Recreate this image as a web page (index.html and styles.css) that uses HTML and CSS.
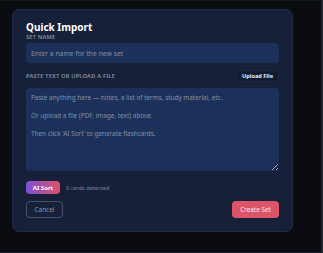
FILE: index.html
```html
<!DOCTYPE html>
<html lang="en">
<head>
    <meta charset="UTF-8">
    <meta name="viewport" content="width=device-width, initial-scale=1.0">
    <title>Quick Import</title>
    <link rel="stylesheet" href="styles.css">
</head>
<body>
    <div class="backdrop">
        <div class="modal">
            <h2 class="modal-title">Quick Import</h2>
            <label class="field-label" for="set-name">Set name</label>
            <input type="text" id="set-name" class="text-input" placeholder="Enter a name for the new set">

            <div class="paste-row">
                <span class="field-label">Paste text or upload a file</span>
                <button class="btn-upload">Upload File</button>
            </div>
            <textarea class="paste-area" placeholder="Paste anything here — notes, a list of terms, study material, etc.&#10;&#10;Or upload a file (PDF, image, text) above.&#10;&#10;Then click 'AI Sort' to generate flashcards."></textarea>

            <div class="sort-row">
                <button class="btn-sort">AI Sort</button>
                <span class="card-count">0 cards detected</span>
            </div>

            <div class="modal-actions">
                <button class="btn-cancel">Cancel</button>
                <button class="btn-create">Create Set</button>
            </div>
        </div>
    </div>
</body>
</html>
```

FILE: styles.css
```css
/* Dark overlay with the import dialog */
body {
    margin: 0;
    background-color: #0b0c11;
    font-family: "Noto Sans", "Open Sans", sans-serif;
}

.backdrop {
    height: 253px;
    box-sizing: border-box;
    padding: 9px 0 0 12px;
    border-top: 1px solid #181a21;
    border-right: 2px solid #23252c;
    border-bottom: 1px solid #1d1f26;
}

.modal {
    width: 281px;
    box-sizing: border-box;
    margin-top: -1px;
    padding: 11px 13px 13px 13px;
    border: 1px solid #222c48;
    border-radius: 7px;
    background-color: #172039;
}

.modal-title {
    margin: 0;
    font-size: 10px;
    line-height: 12px;
    font-weight: 700;
    color: #ffffff;
}

.field-label {
    display: block;
    font-size: 5.7px;
    line-height: 8px;
    font-weight: 600;
    letter-spacing: 0.2px;
    text-transform: uppercase;
    color: #8891a6;
}

.text-input {
    display: block;
    width: 100%;
    height: 20px;
    box-sizing: border-box;
    margin-top: 2px;
    padding: 0 5px;
    border: none;
    border-radius: 4px;
    background-color: #1b3159;
    font-family: inherit;
    font-size: 6.8px;
    color: #dde3ee;
    outline: none;
}

.text-input::placeholder,
.paste-area::placeholder {
    color: #8490a8;
}

.paste-row {
    display: flex;
    justify-content: space-between;
    align-items: center;
    margin-top: 7px;
    height: 12px;
}

.btn-upload {
    height: 12px;
    padding: 0 5px;
    border: 1px solid #1c2540;
    border-radius: 3px;
    background-color: #131b30;
    font-family: inherit;
    font-size: 5.6px;
    font-weight: 700;
    color: #eef1f6;
}

.paste-area {
    display: block;
    width: 100%;
    height: 83px;
    box-sizing: border-box;
    margin-top: 6px;
    padding: 5px;
    border: none;
    border-radius: 4px;
    background-color: #1b3159;
    font-family: inherit;
    font-size: 6.4px;
    line-height: 9px;
    color: #dde3ee;
    resize: vertical;
    outline: none;
}

.sort-row {
    display: flex;
    align-items: center;
    gap: 6px;
    margin-top: 10px;
}

.btn-sort {
    width: 34px;
    height: 13px;
    padding: 0;
    border: none;
    border-radius: 4px;
    background: linear-gradient(90deg, #7a52d8, #de5068);
    font-family: inherit;
    font-size: 6px;
    font-weight: 700;
    color: #ffffff;
}

.card-count {
    font-size: 5.6px;
    color: #7d869b;
}

.modal-actions {
    display: flex;
    justify-content: space-between;
    margin-top: 7px;
}

.btn-cancel,
.btn-create {
    height: 17px;
    border-radius: 4px;
    font-family: inherit;
    font-size: 6.4px;
}

.btn-cancel {
    width: 37px;
    padding: 0;
    border: 1px solid #485069;
    background-color: transparent;
    color: #8991a5;
}

.btn-create {
    width: 47px;
    padding: 0;
    border: none;
    background-color: #dc5468;
    color: #fbe9ec;
}
```
